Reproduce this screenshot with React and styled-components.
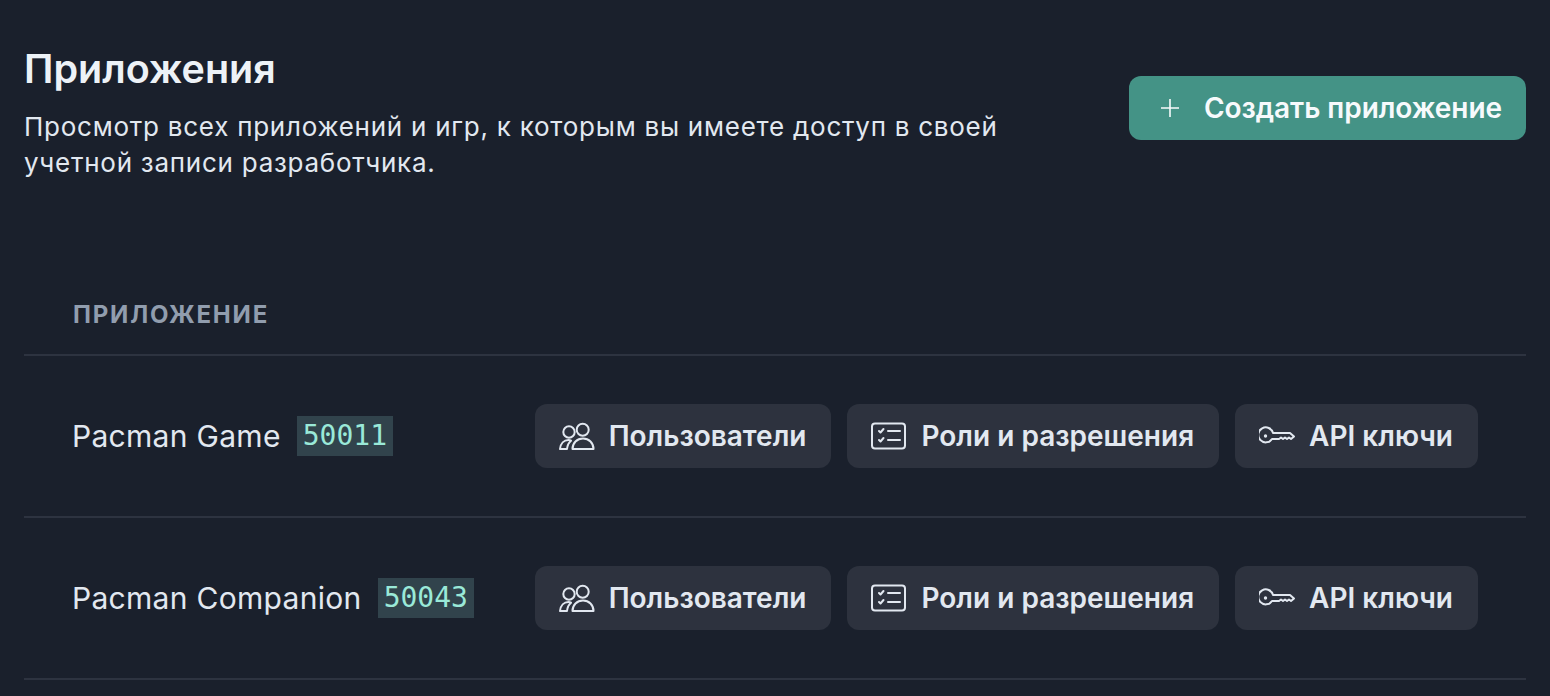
import React from 'react';
import styled, { createGlobalStyle } from 'styled-components';

const Global = createGlobalStyle`
  html, body { margin: 0; padding: 0; background: #1a202c; }
  body { font-family: Inter, "Noto Sans", sans-serif; width: 1550px; height: 696px; overflow: hidden; }
`;

const Page = styled.div`
  box-sizing: border-box;
  width: 1550px;
  height: 696px;
  padding: 47px 24px 0;
  background: #1a202c;
  color: #f7fafc;
`;
const Header = styled.header`
  display: flex;
  justify-content: space-between;
  align-items: flex-start;
`;
const Intro = styled.div`
  width: 1000px;
`;
const Title = styled.h1`
  margin: 0 0 18px;
  font-size: 39.5px;
  line-height: 44px;
  font-weight: 600;
  color: #edf2f7;
`;
const Description = styled.p`
  margin: 0;
  font-size: 26px;
  line-height: 36px;
  letter-spacing: 0.75px;
  color: #e2e8f0;
`;
const PrimaryButton = styled.button`
  display: flex;
  align-items: center;
  gap: 22px;
  height: 64px;
  margin-top: 29px;
  padding: 0 24px 0 29px;
  border: 0;
  border-radius: 12px;
  background: #449386;
  color: #f7fafc;
  font: 600 28px Inter, sans-serif;
  letter-spacing: -0.05px;
`;
const Table = styled.section`
  margin-top: 118px;
`;
const HeadRow = styled.div`
  box-sizing: border-box;
  height: 57px;
  padding-left: 49px;
  border-bottom: 2px solid #2d3340;
  font-size: 24px;
  font-weight: 700;
  line-height: 32px;
  letter-spacing: 1.8px;
  color: #919dae;
`;
const Row = styled.div`
  box-sizing: border-box;
  height: 162px;
  padding: 0 48px;
  display: flex;
  align-items: center;
  justify-content: space-between;
  border-bottom: 2px solid #2d3340;
`;
const Name = styled.div`
  display: flex;
  align-items: center;
  gap: 16px;
`;
const AppName = styled.span`
  font-size: 30px;
  font-weight: 400;
  letter-spacing: 0.3px;
  color: #e2e8f0;
`;
const Id = styled.code`
  display: block;
  height: 40px;
  padding: 0 6px;
  background: #31434c;
  color: #9ae9d8;
  font: 400 28px/40px "DejaVu Sans Mono", monospace;
`;
const Actions = styled.div`
  display: flex;
  gap: 16px;
`;
const ActionButton = styled.button`
  display: flex;
  align-items: center;
  gap: 14px;
  height: 64px;
  padding: 0 25px 0 24px;
  border: 0;
  border-radius: 12px;
  background: #2d323e;
  color: #e2e8f0;
  font: 600 28px Inter, sans-serif;
  svg { flex: none; }
`;

const PlusIcon = () => (
  <svg width="24" height="24" viewBox="0 0 24 24" fill="none" stroke="currentColor" strokeWidth="1.6"><path d="M12 3v18M3 12h18" /></svg>
);
const UsersIcon = () => (
  <svg width="36" height="30" viewBox="0 0 36 30" fill="none" stroke="currentColor" strokeWidth="2" strokeLinejoin="round">
    <circle cx="10" cy="11" r="5.7" />
    <circle cx="23.700" cy="8.700" r="6" />
    <path d="M1 28h7c.4-3.500 1.500-6.300 4-8.300-.8-.5-1.500-.7-2.500-.7C5 19 1.500 22.500 1 28Z" />
    <path d="M13.500 28h21c0-6-4.500-10.500-10.500-10.500S13.500 22 13.500 28Z" />
  </svg>
);
const ListIcon = () => (
  <svg width="36" height="28" viewBox="0 0 36 28" fill="none" stroke="currentColor" strokeWidth="2" strokeLinecap="round" strokeLinejoin="round">
    <rect x="1" y="1.500" width="33" height="25" rx="3" />
    <path d="M8 9l1.500 1.500L12.500 7M8 18l1.500 1.500 3-3.500" />
    <path d="M17 9h12M17 18h12" />
  </svg>
);
const KeyIcon = () => (
  <svg width="36" height="20" viewBox="0 0 36 20" fill="none" stroke="currentColor" strokeWidth="2" strokeLinejoin="round">
    <path d="M14 7h17l4 3.500-3 2.500-2-1.500-2 1.500-2-1.500-2 1.500-2-1.500-2 1.500h-7A7.500 7.500 0 1 1 14 7Z" />
    <circle cx="6.500" cy="10" r="1.700" fill="currentColor" stroke="none" />
  </svg>
);

const Action = ({ icon, children }) => (
  <ActionButton>{icon}{children}</ActionButton>
);

const apps = [
  { name: 'Pacman Game', id: '50011' },
  { name: 'Pacman Companion', id: '50043' },
];

export default function App() {
  return (
    <Page>
      <Global />
      <Header>
        <Intro>
          <Title>Приложения</Title>
          <Description>Просмотр всех приложений и игр, к которым вы имеете доступ в своей учетной записи разработчика.</Description>
        </Intro>
        <PrimaryButton><PlusIcon />Создать приложение</PrimaryButton>
      </Header>
      <Table>
        <HeadRow>ПРИЛОЖЕНИЕ</HeadRow>
        {apps.map((a) => (
          <Row key={a.id}>
            <Name><AppName>{a.name}</AppName><Id>{a.id}</Id></Name>
            <Actions>
              <Action icon={<UsersIcon />}>Пользователи</Action>
              <Action icon={<ListIcon />}>Роли и разрешения</Action>
              <Action icon={<KeyIcon />}>API ключи</Action>
            </Actions>
          </Row>
        ))}
      </Table>
    </Page>
  );
}
